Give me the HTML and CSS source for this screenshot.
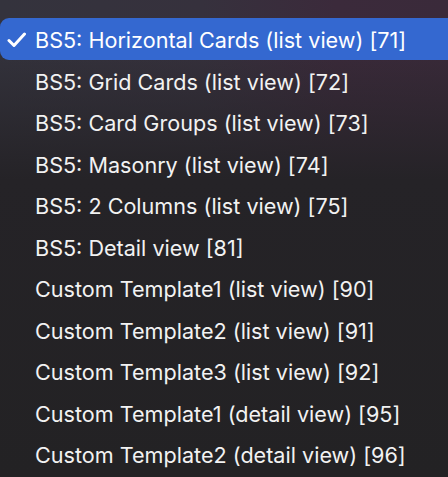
FILE: index.html
```html
<!DOCTYPE html>
<html>
<head>
<meta charset="utf-8">
<link rel="stylesheet" href="styles.css">
</head>
<body>
<ul class="menu">
  <li class="item selected"><svg class="check" width="20" height="16" viewBox="0 0 20 16"><path d="M2 8.5 L7 13.5 L17.5 2" fill="none" stroke="#ffffff" stroke-width="3" stroke-linecap="round" stroke-linejoin="round"/></svg><span class="label">BS5: Horizontal Cards (list view) [71]</span></li>
  <li class="item"><span class="label">BS5: Grid Cards (list view) [72]</span></li>
  <li class="item"><span class="label">BS5: Card Groups (list view) [73]</span></li>
  <li class="item"><span class="label">BS5: Masonry (list view) [74]</span></li>
  <li class="item"><span class="label">BS5: 2 Columns (list view) [75]</span></li>
  <li class="item"><span class="label">BS5: Detail view [81]</span></li>
  <li class="item"><span class="label">Custom Template1 (list view) [90]</span></li>
  <li class="item"><span class="label">Custom Template2 (list view) [91]</span></li>
  <li class="item"><span class="label">Custom Template3 (list view) [92]</span></li>
  <li class="item"><span class="label">Custom Template1 (detail view) [95]</span></li>
  <li class="item"><span class="label">Custom Template2 (detail view) [96]</span></li>
</ul>
</body>
</html>
```
FILE: styles.css
```css
html, body {
  margin: 0;
  padding: 0;
  height: 100%;
  overflow: hidden;
}
body {
  background:
    linear-gradient(180deg, rgba(35,34,37,0) 0px, rgba(35,34,37,0) 40px, #252327 180px, #232224 477px),
    linear-gradient(90deg, #34333d 0%, #36313d 45%, #3b2a3b 75%, #3a2a3a 100%);
  font-family: Inter, "Noto Sans", sans-serif;
  color: #f2f2f2;
}
.menu {
  list-style: none;
  margin: 0;
  padding: 18px 0 0 0;
}
.item {
  position: relative;
  height: 41.5px;
  display: flex;
  align-items: center;
  padding-left: 35px;
  font-size: 21.6px;
  white-space: nowrap;
}
.label {
  padding-top: 3px;
}
.selected {
  background: #3468d0;
  border-radius: 9px 0 0 9px;
  margin-right: -10px;
  color: #ffffff;
}
.check {
  position: absolute;
  left: 7px;
  top: 14px;
}
```
